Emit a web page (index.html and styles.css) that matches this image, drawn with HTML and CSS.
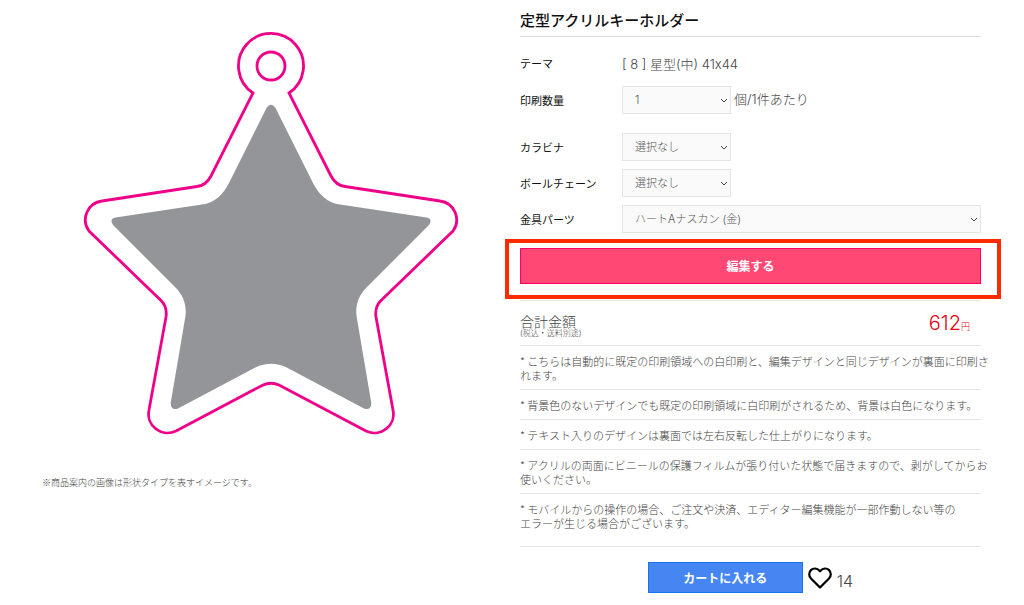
FILE: index.html
```html
<!DOCTYPE html>
<html lang="ja">
<head>
    <meta charset="UTF-8">
    <meta name="viewport" content="width=device-width, initial-scale=1.0">
    <title>定型アクリルキーホルダー</title>
    <link rel="stylesheet" href="styles.css">
</head>
<body>

    <main class="product">
        <section class="preview">
            <svg class="shape" viewBox="41 0 461 470" role="img" aria-label="星型">
                <!-- cut line -->
                <g fill="none" stroke="#ef0088" stroke-width="2.8">
                    <circle cx="271" cy="66" r="14"/>
                    <path d="M253 93 A32.5 32.5 0 1 1 289 93 L331 176 Q336 185.500 345 186.500 L440 201 A19 19 0 0 1 453 231 L381 300.500 Q374.500 307 376 317 L393 410 A19 19 0 0 1 366 431 L279 385 Q271 381.500 263 385 L176 431 A19 19 0 0 1 149 410 L166 317 Q167.500 307 161 300.500 L89 231 A19 19 0 0 1 102 201 L197 186.500 Q206 185.500 211 176 Z"/>
                </g>
                <!-- print area -->
                <path fill="#939598" d="M266.500 108 Q271 101.500 275.500 108 L313 183 C319 195 328 203 340 204.500 L426.500 217.500 Q433 219 429 225 L367 287 C358 296 355 306 356.700 317 L371.300 403 Q371 411 364 408.500 L286.700 367.500 C276 362.500 266 362.500 255.300 367.500 L178 408.500 Q171 411 170.700 403 L185.300 317 C187 306 184 296 175 287 L113 225 Q109 219 115.500 217.500 L202 204.500 C214 203 223 195 229 183 Z"/>
            </svg>
            <p class="caption">※商品案内の画像は形状タイプを表すイメージです。</p>
        </section>

        <section class="detail">
            <h1>定型アクリルキーホルダー</h1>

            <form id="orderForm">
                <div class="form-group theme">
                    <span class="label">テーマ</span>
                    <span class="value">[ 8 ] 星型(中) 41x44</span>
                </div>

                <div class="form-group quantity">
                    <label for="quantity">印刷数量</label>
                    <div class="select">
                        <select id="quantity" name="quantity">
                            <option>1</option>
                            <option>2</option>
                            <option>3</option>
                        </select>
                        <svg viewBox="0 0 8 5"><path d="M1 1l3 3 3-3"/></svg>
                    </div>
                    <span class="unit">個/1件あたり</span>
                </div>

                <div class="form-group">
                    <label for="carabiner">カラビナ</label>
                    <div class="select">
                        <select id="carabiner" name="carabiner">
                            <option>選択なし</option>
                        </select>
                        <svg viewBox="0 0 8 5"><path d="M1 1l3 3 3-3"/></svg>
                    </div>
                </div>

                <div class="form-group">
                    <label for="chain">ボールチェーン</label>
                    <div class="select">
                        <select id="chain" name="chain">
                            <option>選択なし</option>
                        </select>
                        <svg viewBox="0 0 8 5"><path d="M1 1l3 3 3-3"/></svg>
                    </div>
                </div>

                <div class="form-group">
                    <label for="parts">金具パーツ</label>
                    <div class="select wide">
                        <select id="parts" name="parts">
                            <option>ハートAナスカン (金)</option>
                        </select>
                        <svg viewBox="0 0 8 5"><path d="M1 1l3 3 3-3"/></svg>
                    </div>
                </div>

                <div class="edit">
                    <button type="button" class="edit-button">編集する</button>
                </div>

                <div class="total">
                    <div class="total-label">
                        合計金額
                        <small>(税込・送料別途)</small>
                    </div>
                    <div class="price">612<span>円</span></div>
                </div>

                <ul class="notes">
                    <li>* こちらは自動的に既定の印刷領域への白印刷と、編集デザインと同じデザインが裏面に印刷さ<br>れます。</li>
                    <li>* 背景色のないデザインでも既定の印刷領域に白印刷がされるため、背景は白色になります。</li>
                    <li>* テキスト入りのデザインは裏面では左右反転した仕上がりになります。</li>
                    <li>* アクリルの両面にビニールの保護フィルムが張り付いた状態で届きますので、剥がしてからお<br>使いください。</li>
                    <li>* モバイルからの操作の場合、ご注文や決済、エディター編集機能が一部作動しない等の<br>エラーが生じる場合がございます。</li>
                </ul>

                <div class="actions">
                    <button type="submit" class="cart-button">カートに入れる</button>
                    <button type="button" class="like" aria-label="お気に入り">
                        <svg viewBox="0 0 24 22"><path d="M12 20.500 L3 11.500 C0.500 9 0.800 5.200 2.900 3.100 C5.300 0.800 9.200 1 11.200 3.400 L12 4.300 L12.800 3.400 C14.800 1 18.700 0.800 21.100 3.100 C23.200 5.200 23.500 9 21 11.500 Z"/></svg>
                    </button>
                    <span class="like-count">14</span>
                </div>
            </form>
        </section>
    </main>

</body>
</html>
```

FILE: styles.css
```css
* {
    box-sizing: border-box;
}

body {
    margin: 0;
    background-color: #fff;
    color: #444;
    font-family: Inter, "Noto Sans CJK JP", sans-serif;
    font-size: 11px;
    font-weight: 300;
}

button, select {
    font-family: inherit;
}

.product {
    display: grid;
    grid-template-columns: minmax(0, 1fr) minmax(0, 1fr);
    gap: 18px;
    padding: 0 43px 0 41px;
}

.shape {
    display: block;
    width: 100%;
}

.caption, .notes {
    font-family: "Noto Sans CJK JP", sans-serif;
}

.caption {
    margin: 5px 0 0 1px;
    font-size: 9px;
    line-height: 16px;
}

h1 {
    height: 37px;
    margin: 0;
    padding-top: 11px;
    border-bottom: 1px solid #ddd;
    color: #111;
    font-size: 15px;
    font-weight: 500;
    line-height: 20px;
}

.form-group {
    display: grid;
    grid-template-columns: 102px auto 1fr;
    align-items: center;
    min-height: 28px;
    margin-bottom: 8px;
}

.theme {
    margin: 12px 0 9px;
}

.quantity {
    margin-bottom: 19px;
}

label, .label {
    color: #111;
    font-weight: 400;
}

.value, .unit {
    font-size: 13px;
}

.unit {
    padding: 0 0 3px 3px;
}

.select {
    position: relative;
    width: 109px;
}

.select.wide {
    grid-column: 2 / 4;
    width: 100%;
}

.select svg {
    position: absolute;
    right: 3px;
    top: 12px;
    width: 8px;
    height: 5px;
    fill: none;
    stroke: #444;
    pointer-events: none;
}

select {
    display: block;
    width: 100%;
    height: 28px;
    padding: 0 12px;
    border: 1px solid #e5e5e5;
    border-radius: 0;
    background-color: #fafafa;
    color: #555;
    font-size: 11px;
    font-weight: 300;
    appearance: none;
}

.edit {
    position: relative;
    margin: 15px 0 16px;
}

/* highlight frame around the edit button */
.edit::after {
    content: "";
    position: absolute;
    inset: -9px -20px -15px -15px;
    border: 4px solid #ff2a00;
    pointer-events: none;
}

.edit-button {
    display: block;
    width: 100%;
    height: 36px;
    padding: 0 0 2px;
    border: 1px solid #ff0066;
    background-color: #ff4874;
    color: #fff;
    font-size: 12px;
    font-weight: 700;
}

.total {
    display: flex;
    justify-content: space-between;
    align-items: center;
    height: 46px;
    border-top: 1px solid #e5e5e5;
    border-bottom: 1px solid #e5e5e5;
}

.total-label {
    padding-top: 6px;
    font-size: 14px;
    line-height: 14px;
}

.total-label small {
    display: block;
    font-size: 8px;
    line-height: 8px;
}

.price {
    padding: 3px 11px 0 0;
    color: #e60012;
    font-size: 20px;
    line-height: 20px;
}

.price span {
    font-size: 9px;
}

.notes {
    margin: 0;
    padding: 0;
    list-style: none;
    line-height: 14px;
    white-space: nowrap;
}

.notes li {
    padding: 8px 0 7px;
    border-bottom: 1px solid #e5e5e5;
}

.notes li:last-child {
    padding-bottom: 16px;
}

.actions {
    display: flex;
    justify-content: center;
    align-items: center;
    padding-top: 15px;
}

.cart-button {
    width: 155px;
    height: 31px;
    border: 1px solid #1a73f0;
    background-color: #4686f3;
    color: #fff;
    font-size: 12px;
    font-weight: 700;
}

.like {
    width: 24px;
    height: 22px;
    margin: 0 5px;
    padding: 0;
    border: none;
    background: none;
}

.like svg {
    display: block;
    fill: none;
    stroke: #000;
    stroke-width: 2.2;
    stroke-linejoin: round;
}

.like-count {
    padding-top: 6px;
    font-size: 16px;
    line-height: 20px;
}
```
